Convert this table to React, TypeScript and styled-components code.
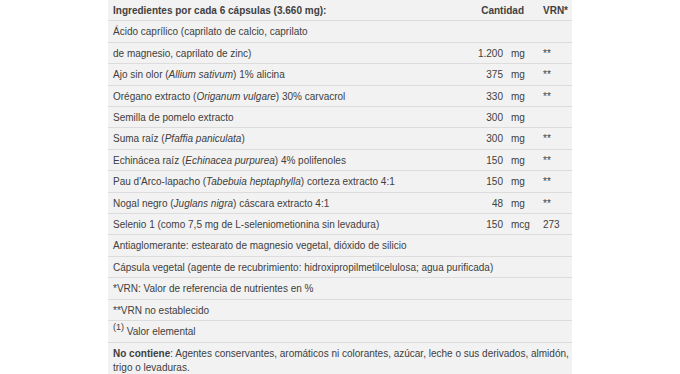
import React from "react";
import styled, { createGlobalStyle } from "styled-components";

const Global = createGlobalStyle`
  html, body { margin: 0; padding: 0; background: #ffffff; }
  body { font-family: "Liberation Sans", Arial, Helvetica, sans-serif; }
`;

const Page = styled.div`
  width: 680px;
  height: 374px;
  overflow: hidden;
  display: flex;
  justify-content: center;
  align-items: flex-start;
`;

const Table = styled.table`
  width: 464px;
  border-collapse: collapse;
  table-layout: fixed;
  background: #f2f2f2;
  color: #404040;
  font-size: 10px;
  line-height: 15.4px;
`;

const Row = styled.tr`
  border-bottom: 1px solid #dcdcdc;
`;

const Cell = styled.td<{ $align?: "left" | "right"; $pl?: number; $pr?: number }>`
  padding: 3px ${(p) => p.$pr ?? 5}px 2px ${(p) => p.$pl ?? 5}px;
  text-align: ${(p) => p.$align ?? "left"};
  vertical-align: middle;
  white-space: nowrap;
  overflow: visible;
`;

const WrapCell = styled.td`
  padding: 4px 0 1px 5px;
  text-align: left;
  vertical-align: middle;
  line-height: 14.5px;
`;

const Head = styled.th<{ $align?: "left" | "right"; $pr?: number; $pl?: number }>`
  padding: 3px ${(p) => p.$pr ?? 5}px 2px ${(p) => p.$pl ?? 5}px;
  text-align: ${(p) => p.$align ?? "left"};
  font-weight: 700;
  white-space: nowrap;
`;

const Sup = styled.sup`
  font-size: 9px;
  line-height: 0;
  vertical-align: 5px;
`;

type Item = {
  name: React.ReactNode;
  qty?: string;
  unit?: string;
  vrn?: string;
};

const items: Item[] = [
  { name: "Ácido caprílico (caprilato de calcio, caprilato" },
  { name: "de magnesio, caprilato de zinc)", qty: "1.200", unit: "mg", vrn: "**" },
  { name: <>Ajo sin olor (<i>Allium sativum</i>) 1% alicina</>, qty: "375", unit: "mg", vrn: "**" },
  { name: <>Orégano extracto (<i>Origanum vulgare</i>) 30% carvacrol</>, qty: "330", unit: "mg", vrn: "**" },
  { name: "Semilla de pomelo extracto", qty: "300", unit: "mg" },
  { name: <>Suma raíz (<i>Pfaffia paniculata</i>)</>, qty: "300", unit: "mg", vrn: "**" },
  { name: <>Echinácea raíz (<i>Echinacea purpurea</i>) 4% polifenoles</>, qty: "150", unit: "mg", vrn: "**" },
  { name: <>Pau d'Arco-lapacho (<i>Tabebuia heptaphylla</i>) corteza extracto 4:1</>, qty: "150", unit: "mg", vrn: "**" },
  { name: <>Nogal negro (<i>Juglans nigra</i>) cáscara extracto 4:1</>, qty: "48", unit: "mg", vrn: "**" },
  { name: "Selenio 1 (como 7,5 mg de L-seleniometionina sin levadura)", qty: "150", unit: "mcg", vrn: "273" },
];

const notes: React.ReactNode[] = [
  "Antiaglomerante: estearato de magnesio vegetal, dióxido de silicio",
  "Cápsula vegetal (agente de recubrimiento: hidroxipropilmetilcelulosa; agua purificada)",
  "*VRN: Valor de referencia de nutrientes en %",
  "**VRN no establecido",
  <><Sup>(1)</Sup> Valor elemental</>,
];

export default function App() {
  return (
    <Page>
      <Global />
      <Table>
        <colgroup>
          <col />
          <col style={{ width: 52 }} />
          <col style={{ width: 32 }} />
          <col style={{ width: 34 }} />
        </colgroup>
        <thead>
          <Row>
            <Head>Ingredientes por cada 6 cápsulas (3.660 mg):</Head>
            <Head colSpan={2} $align="right" $pr={14}>Cantidad</Head>
            <Head $pl={5}>VRN*</Head>
          </Row>
        </thead>
        <tbody>
          {items.map((it, i) => (
            <Row key={i}>
              <Cell>{it.name}</Cell>
              <Cell $align="right" $pr={3}>{it.qty}</Cell>
              <Cell $pl={5} $pr={0}>{it.unit}</Cell>
              <Cell $pl={5} $pr={0}>{it.vrn}</Cell>
            </Row>
          ))}
          {notes.map((n, i) => (
            <Row key={"n" + i}>
              <Cell colSpan={4}>{n}</Cell>
            </Row>
          ))}
          <Row>
            <WrapCell colSpan={4}>
              <b>No contiene</b>: Agentes conservantes, aromáticos ni colorantes, azúcar, leche o sus derivados, almidón, trigo o levaduras.
            </WrapCell>
          </Row>
        </tbody>
      </Table>
    </Page>
  );
}
